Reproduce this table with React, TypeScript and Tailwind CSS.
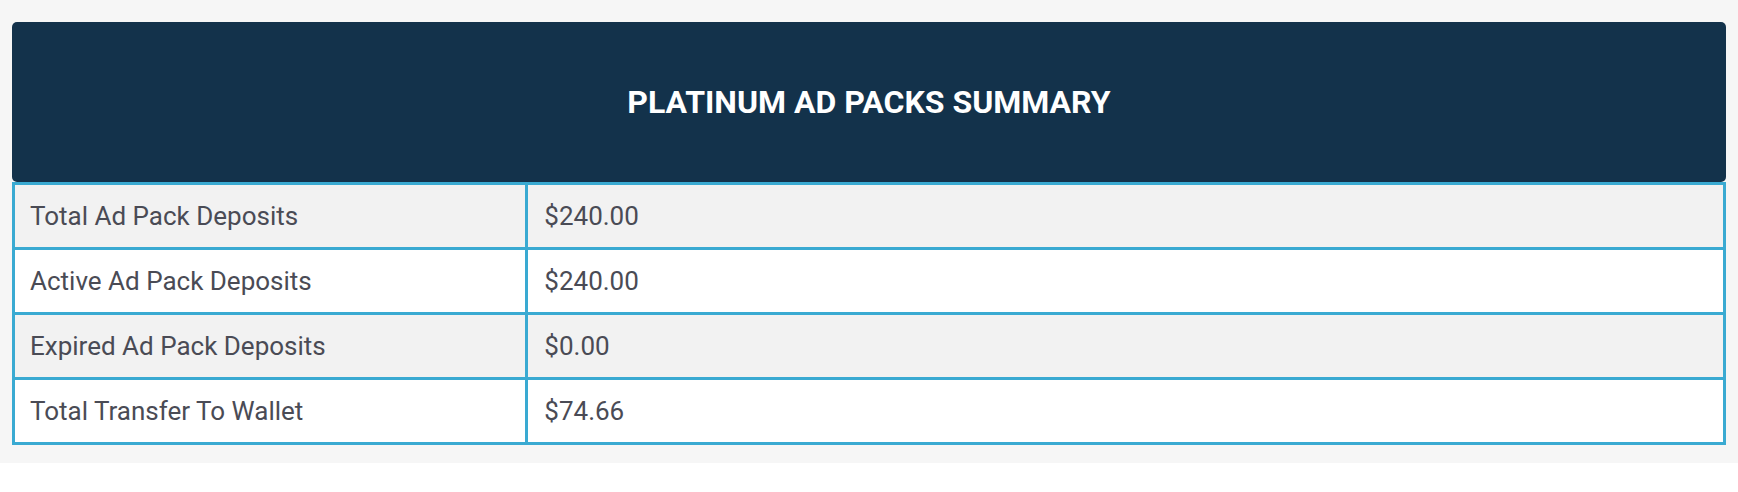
const rows = [
  { label: "Total Ad Pack Deposits", value: "$240.00" },
  { label: "Active Ad Pack Deposits", value: "$240.00" },
  { label: "Expired Ad Pack Deposits", value: "$0.00" },
  { label: "Total Transfer To Wallet", value: "$74.66" },
];

export default function App() {
  return (
    <div className="min-h-screen bg-white font-['Roboto',sans-serif]">
      <div className="bg-[#f6f6f6] px-[12px] pt-[22px] pb-[18px]">
        <div className="flex h-[160px] items-center justify-center rounded-[5px] bg-[#13324b]">
          <h2 className="text-[32px] font-bold uppercase text-white">
            Platinum Ad Packs Summary
          </h2>
        </div>
        <table className="w-full border-collapse text-[26px] text-[#4a4b55]">
          <tbody>
            {rows.map((row, i) => (
              <tr
                key={row.label}
                className={i % 2 === 0 ? "bg-[#f2f2f2]" : "bg-white"}
              >
                <td className="h-[65px] w-[30%] border-[3px] border-[#3aaad2] px-[15px] align-middle">
                  {row.label}
                </td>
                <td className="h-[65px] border-[3px] border-[#3aaad2] px-[16px] align-middle">
                  {row.value}
                </td>
              </tr>
            ))}
          </tbody>
        </table>
      </div>
    </div>
  );
}
